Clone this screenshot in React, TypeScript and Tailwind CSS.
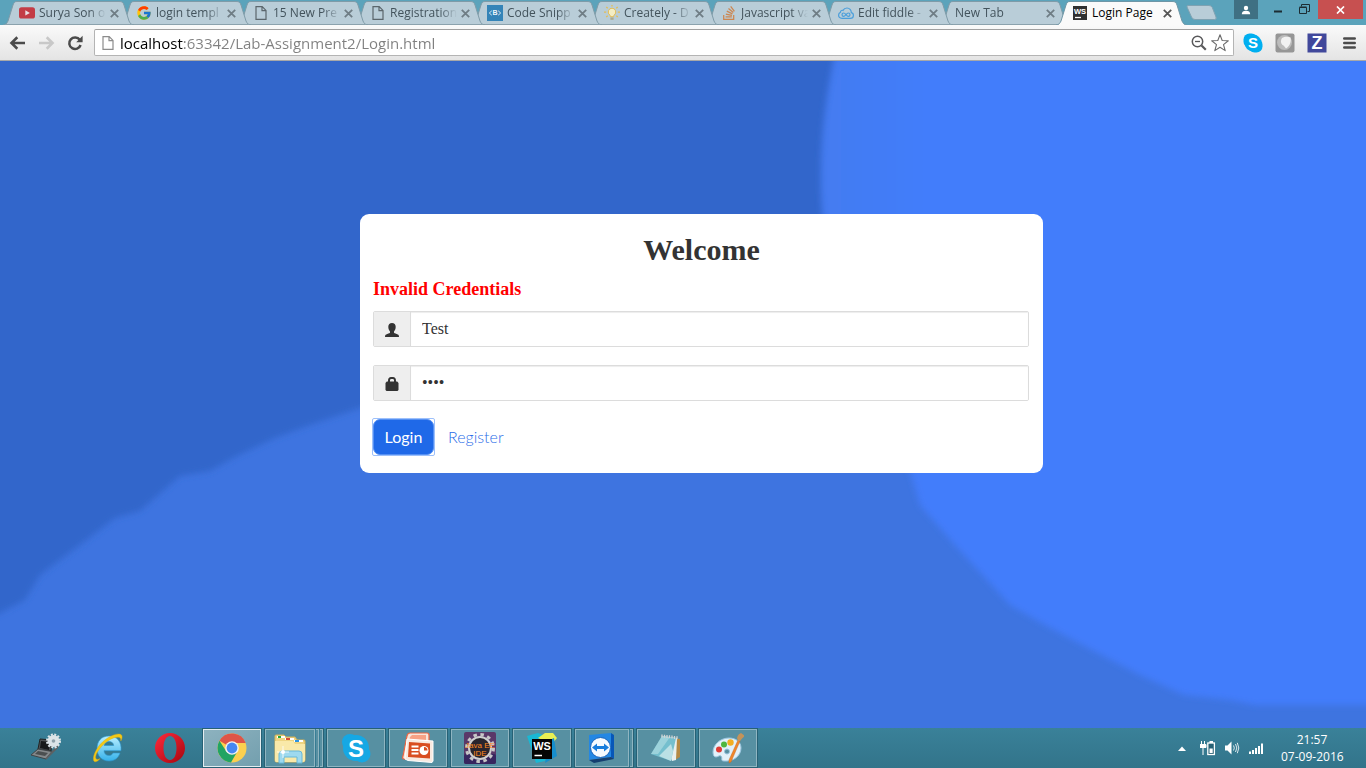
import React from "react";
import { FcGoogle } from "react-icons/fc";
import { FaStackOverflow } from "react-icons/fa";

const UI_FONT = "font-['Open_Sans','Noto_Sans',sans-serif]";

/* ---------- tab icons ---------- */

function PageIcon({ className = "" }: { className?: string }) {
  return (
    <svg viewBox="0 0 16 16" className={`h-4 w-4 shrink-0 ${className}`} fill="none" stroke="currentColor" strokeWidth="1.2">
      <path d="M3 1.6h6.2L13 5.4v9H3zM9 1.6v4h4" />
    </svg>
  );
}

function YoutubeIcon() {
  return (
    <svg viewBox="0 0 16 16" className="h-4 w-4 shrink-0">
      <rect x="0" y="2.3" width="16" height="11.2" rx="2.6" fill="#c33c46" />
      <path d="M6.3 5.2v5.4l4.6-2.7z" fill="#eadfe4" />
    </svg>
  );
}

function CodeIcon() {
  return (
    <svg viewBox="0 0 16 16" className="h-4 w-4 shrink-0">
      <rect width="16" height="16" fill="#3484b8" />
      <path d="M4.8 5.8 2.3 8l2.5 2.2M11.2 5.8 13.7 8l-2.5 2.2" stroke="#dcebf3" fill="none" />
      <text x="8" y="10.4" fontSize="7" fontWeight="700" textAnchor="middle" fill="#eef6fa" fontFamily="Liberation Sans">B</text>
    </svg>
  );
}

function BulbIcon() {
  return (
    <svg viewBox="0 0 16 16" className="h-4 w-4 shrink-0">
      <path d="M8 3.2a3.8 3.8 0 0 0-2.3 6.8c.6.6.6 1 .7 1.7h3.2c.1-.7.1-1.1.7-1.7A3.8 3.8 0 0 0 8 3.2z" fill="#f3edc4" stroke="#e3bd55" strokeWidth="1" />
      <path d="M6.4 12.5h3.2v2.3H6.4z" fill="#a9a98f" />
      <path d="M8 0v1.5M2.3 2l1.4 1.3M13.7 2l-1.4 1.3M0 7.2h2.2M13.8 7.2H16M2.2 12l1.5-1.2M13.8 12l-1.5-1.2" stroke="#e3bd55" strokeWidth="1.3" />
    </svg>
  );
}

function FiddleIcon() {
  return (
    <svg viewBox="0 0 16 16" className="h-4 w-4 shrink-0" fill="none" stroke="#4a9edb" strokeWidth="1.2">
      <path d="M4 13.3h8.2c2 0 3.2-1.3 3.2-2.9 0-1.5-1-2.6-2.1-2.8C13.400 5 11.500 3 9 3 7.200 3 5.800 3.900 5 5.400c-1.400-.5-2.600.5-2.500 1.900C1.300 7.800.6 8.900.6 10.100c0 1.900 1.500 3.200 3.400 3.200z" />
      <path d="M8 9.600C7.200 8.600 6.500 8 5.700 8a1.700 1.700 0 0 0 0 3.400C7.200 11.400 8.500 8 10.300 8a1.700 1.700 0 0 1 0 3.400c-.8 0-1.500-.8-2.300-1.800z" />
    </svg>
  );
}

function WebStormIcon() {
  return (
    <svg viewBox="0 0 16 16" className="h-4 w-4 shrink-0">
      <rect x="1" y="1" width="14" height="14" fill="#303030" />
      <text x="8" y="9" fontSize="7.500" fontWeight="700" textAnchor="middle" fill="#fff" fontFamily="Liberation Sans">WS</text>
      <path d="M3 12.500h6" stroke="#fff" strokeWidth="1.300" />
    </svg>
  );
}

interface TabInfo {
  title: string;
  icon: React.ReactNode;
  active?: boolean;
}

const tabs: TabInfo[] = [
  { title: "Surya Son of", icon: <YoutubeIcon /> },
  { title: "login templ", icon: <FcGoogle className="h-4 w-4 shrink-0" /> },
  { title: "15 New Pre", icon: <PageIcon className="text-[#5b666c]" /> },
  { title: "Registration", icon: <PageIcon className="text-[#5b666c]" /> },
  { title: "Code Snipp", icon: <CodeIcon /> },
  { title: "Creately - D", icon: <BulbIcon /> },
  { title: "Javascript va", icon: <FaStackOverflow className="h-4 w-4 shrink-0 text-[#cc8650]" /> },
  { title: "Edit fiddle -", icon: <FiddleIcon /> },
  { title: "New Tab", icon: null },
  { title: "Login Page", icon: <WebStormIcon />, active: true },
];

function Tab({ tab, order }: { tab: TabInfo; order: number }) {
  return (
    <div className="relative -mr-[14px] grid h-6 w-[131px] shrink-0 grid-cols-1" style={{ zIndex: order }}>
      <svg viewBox="0 0 131 24" className="col-start-1 row-start-1 h-6 w-full" preserveAspectRatio="none">
        <path
          d="M0 24C3 24 4 22 5 20L10 4C11 1 12 .5 14 .5H116C119 .5 120 1 121 4L126 20C127 22 128 24 131 24"
          fill={tab.active ? "#fafafa" : "#b9cdd8"}
          stroke={tab.active ? "#6f96a6" : "#7f9ba8"}
        />
        {!tab.active && <path d="M3 23.500H128" stroke="#8ba2ad" />}
      </svg>
      <div className="col-start-1 row-start-1 flex items-center pr-[15px] pl-4">
        {tab.icon}
        <a
          href="#"
          className={`h-5 min-w-0 flex-1 overflow-hidden text-xs leading-5 whitespace-nowrap ${tab.icon ? "ml-1" : ""} ${
            tab.active
              ? "text-black"
              : "text-[#43535c] [mask-image:linear-gradient(to_right,black_75%,transparent_100%)]"
          }`}
        >
          {tab.title}
        </a>
        <button aria-label={`Close ${tab.title}`} className="ml-1 h-[9px] w-[9px]">
          <svg viewBox="0 0 9 9" className="block h-[9px] w-[9px]">
            <path d="M.8.8l7.400 7.400M8.200.8L.8 8.200" stroke={tab.active ? "#555" : "#6f7d85"} strokeWidth="1.800" />
          </svg>
        </button>
      </div>
    </div>
  );
}

function TabStrip() {
  return (
    <div className="flex h-[25px] items-start justify-between bg-[#5ba3bb]">
      <div className="relative z-10 flex pt-px pl-[3px]">
        {tabs.map((tab, i) => (
          <Tab key={tab.title} tab={tab} order={tab.active ? 50 : tabs.length - i} />
        ))}
        <button aria-label="New tab" className="mt-1 ml-[12px] h-4 w-8">
          <svg viewBox="0 0 32 16" className="block h-4 w-8">
            <path d="M3 .5h21q2.500 0 3.300 2L31 12q1 2.500-1.500 2.500H10q-2.500 0-3.500-2.500L2 2Q1.500.5 3 .5z" fill="#b9cdd8" stroke="#7fa2b2" />
          </svg>
        </button>
      </div>
      <div className="flex h-[19px] shrink-0 pr-[3px]">
        <button aria-label="Profile" className="flex w-6 items-center justify-center bg-[#3f7083]">
          <svg viewBox="0 0 10 10" className="h-[10px] w-[10px]" fill="#fff">
            <circle cx="5" cy="3" r="2.200" />
            <path d="M.8 9.300c0-2.500 1.500-3.500 4.200-3.500s4.200 1 4.200 3.500z" />
          </svg>
        </button>
        <button aria-label="Minimise" className="flex w-[36px] items-center justify-center pt-1 pl-1">
          <svg viewBox="0 0 8 3" className="h-[3px] w-2"><rect width="8" height="2" y=".5" fill="#1c2c33" /></svg>
        </button>
        <button aria-label="Restore" className="flex w-6 items-center justify-center pr-1">
          <svg viewBox="0 0 11 11" className="h-[11px] w-[11px]" fill="none" stroke="#1c2c33">
            <path d="M2.500 2.500v-2h8v7h-2" />
            <path d="M.5 3.500h7v6h-7zM.5 3h7" />
          </svg>
        </button>
        <button aria-label="Close window" className="flex w-[45px] items-center justify-center bg-[#c75050]">
          <svg viewBox="0 0 9 8" className="h-2 w-[9px]"><path d="M1 .5l7 7M8 .5l-7 7" stroke="#fff" strokeWidth="1.700" /></svg>
        </button>
      </div>
    </div>
  );
}

function Toolbar() {
  return (
    <div className="flex h-9 items-center border-b border-[#a8a8a8] bg-linear-to-b from-[#fafafa] to-[#e4e4e4] pr-[10px] pl-[9px]">
      <button aria-label="Back" className="h-4 w-4">
        <svg viewBox="0 0 16 16" className="h-4 w-4" fill="none" stroke="#4b4b4b" strokeWidth="2.600"><path d="M16 8H3M8.300 2.300 2.500 8l5.800 5.700" /></svg>
      </button>
      <button aria-label="Forward" className="ml-[14px] h-4 w-4">
        <svg viewBox="0 0 16 16" className="h-4 w-4" fill="none" stroke="#c8c8c8" strokeWidth="2.600"><path d="M0 8h13M7.700 2.300 13.500 8l-5.800 5.700" /></svg>
      </button>
      <button aria-label="Reload" className="ml-3 h-4 w-4">
        <svg viewBox="0 0 16 16" className="h-4 w-4">
          <path d="M12.800 4.800A5.800 5.800 0 1 0 13.600 10" fill="none" stroke="#4b4b4b" strokeWidth="2.500" />
          <path d="M15.600.8v6.400H9.200z" fill="#4b4b4b" />
        </svg>
      </button>
      <div className="ml-[11px] flex h-[27px] min-w-0 flex-1 items-center rounded-[2px] border border-[#b4b4b4] border-t-[#a0a0a0] bg-white pr-1 pl-[5px]">
        <PageIcon className="text-[#8c8c8c]" />
        <input
          aria-label="Address"
          defaultValue="localhost:63342/Lab-Assignment2/Login.html"
          className="ml-1 h-6 min-w-0 flex-1 bg-[linear-gradient(to_right,#000_63px,#808080_63px)] bg-clip-text text-[15px] text-transparent outline-none"
        />
        <button aria-label="Zoom" className="h-4 w-4">
          <svg viewBox="0 0 16 16" className="h-4 w-4" fill="none" stroke="#59595b">
            <circle cx="6.500" cy="6.500" r="5.200" strokeWidth="1.500" />
            <path d="M4 6.500h5" strokeWidth="1.300" />
            <path d="M10.500 10.500 14.800 14.800" strokeWidth="2.200" />
          </svg>
        </button>
        <button aria-label="Bookmark" className="ml-1 h-[18px] w-[18px]">
          <svg viewBox="0 0 18 18" className="h-[18px] w-[18px]" fill="none" stroke="#6b6b6b" strokeWidth="1.100" strokeLinejoin="round">
            <path d="M9 .8l2.200 5.700 6.100.3-4.800 3.800 1.700 6L9 13.200l-5.200 3.400 1.700-6L.7 6.800l6.100-.3z" />
          </svg>
        </button>
      </div>
      <button aria-label="Skype" className="ml-[9px] h-5 w-5">
        <svg viewBox="0 0 20 20" className="h-5 w-5">
          <rect x=".5" y=".5" width="14" height="14" rx="6" fill="#00aff0" />
          <rect x="5.500" y="5.500" width="14" height="14" rx="6" fill="#00aff0" />
          <circle cx="10" cy="10" r="8.500" fill="#00aff0" />
          <text x="10" y="15.200" fontSize="15" fontWeight="700" textAnchor="middle" fill="#fff" fontFamily="Liberation Sans">S</text>
        </svg>
      </button>
      <button aria-label="Extension" className="ml-3 h-5 w-5">
        <svg viewBox="0 0 20 20" className="h-5 w-5">
          <rect x=".5" y=".5" width="19" height="19" rx="2" fill="#969696" />
          <circle cx="9.500" cy="9.500" r="7.500" fill="#bcbcbc" />
          <path d="M7 5c2.500-1.500 6-1.500 8.500-.5 1 4-.5 8.500-4.500 11-1-1.500-2-3-3.500-3.500C5.500 10.500 5.500 7 7 5z" fill="#f2f2f2" />
        </svg>
      </button>
      <button aria-label="Zotero" className="ml-3 h-5 w-5">
        <svg viewBox="0 0 20 20" className="h-5 w-5">
          <rect x=".5" y=".5" width="19" height="19" fill="#41489b" />
          <text x="10" y="16.300" fontSize="18" fontWeight="700" textAnchor="middle" fill="#fff" fontFamily="Liberation Sans">Z</text>
        </svg>
      </button>
      <button aria-label="Menu" className="ml-4 h-3 w-[13px]">
        <svg viewBox="0 0 13 12" className="block h-3 w-[13px]" stroke="#4b4b4b" strokeWidth="2.600" strokeLinecap="round"><path d="M1.300 1.500h10.400M1.300 6h10.400M1.300 10.500h10.400" /></svg>
      </button>
    </div>
  );
}

/* ---------- page ---------- */

function Backdrop() {
  return (
    <svg viewBox="0 0 1366 667" preserveAspectRatio="none" className="col-start-1 row-start-1 h-full w-full">
      <defs>
        <filter id="soft" x="-5%" y="-5%" width="110%" height="110%">
          <feGaussianBlur stdDeviation="3" />
        </filter>
        <linearGradient id="rim" x1="820" x2="930" y1="0" y2="0" gradientUnits="userSpaceOnUse">
          <stop offset="0" stopColor="#447cf0" />
          <stop offset="1" stopColor="#427dfb" />
        </linearGradient>
      </defs>
      <rect width="1366" height="667" fill="#3e74e0" />
      <path d="M-20 -20H900V300H480L400 334 360 347 310 364 275 377 235 396 210 410 180 415 140 450 115 457 80 484 40 514 25 539 0 552 -20 562z" fill="#3266cb" filter="url(#soft)" />
      <path d="M838 -20C828 20 821 70 821 110C819 200 850 320 910 410L920 444 955 484 1000 533 1010 544 1045 564 1092 589 1140 614 1184 634 1230 639 1255 644 1390 644V-20z" fill="url(#rim)" filter="url(#soft)" />
    </svg>
  );
}

function Field({ id, label, type, value, children }: { id: string; label: string; type: string; value: string; children: React.ReactNode }) {
  return (
    <div className="flex h-9 overflow-hidden rounded-[2px] border border-[#dcdcdc]">
      <label htmlFor={id} aria-label={label} className="flex w-[37px] items-center justify-center border-r border-[#dcdcdc] bg-[#eee] pt-px text-[#333]">
        {children}
      </label>
      <input
        id={id}
        type={type}
        defaultValue={value}
        className="min-w-0 flex-1 bg-white px-[11px] text-base text-[#333] shadow-[inset_0_1px_1px_rgba(0,0,0,0.075)] outline-none"
      />
    </div>
  );
}

function LoginPage() {
  return (
    <main className="grid flex-1 grid-cols-1">
      <Backdrop />
      <div className="z-10 col-start-1 row-start-1 flex items-start justify-center pt-[153px] pb-8 pl-[37px]">
        <form
          onSubmit={(e) => e.preventDefault()}
          className="w-[50vw] rounded-[9px] bg-white px-[13px] pt-[19px] pb-[17px] font-['Liberation_Serif',serif]"
        >
          <h1 className="text-center text-[30px] leading-[33px] font-bold text-[#333]">Welcome</h1>
          <p className="mt-[13px] text-lg leading-5 font-bold text-[#f00]">Invalid Credentials</p>
          <div className="mt-3 flex flex-col gap-[18px] pr-px">
            <Field id="user" label="User name" type="text" value="Test">
              <svg viewBox="0 0 14 14" className="h-[14px] w-[14px]" fill="currentColor">
                <path d="M7 0C9.300 0 10.700 1.500 10.700 3.700c0 1.900-.7 3.600-1.700 4.700v1.400c.6.700 2.400 1 3.800 1.700.8.400 1.200 1 1.200 2.500H0c0-1.500.4-2.100 1.200-2.500 1.400-.7 3.200-1 3.800-1.700V8.400C4 7.300 3.300 5.600 3.300 3.700 3.300 1.500 4.700 0 7 0z" />
              </svg>
            </Field>
            <Field id="pass" label="Password" type="password" value="test">
              <svg viewBox="0 0 14 14" className="h-[14px] w-[14px]" fill="currentColor">
                <path d="M3 4.500V3.800C3 1.200 4.200 0 6 0h2c1.800 0 3 1.200 3 3.800v.7h1.200L13.500 6v7l-1 1H1.500l-1-1V6l1.300-1.500zm2 0h4V3.600C9 2.500 8.600 2 7.700 2H6.300C5.400 2 5 2.500 5 3.600z" />
              </svg>
            </Field>
          </div>
          <div className="mt-[17px] flex items-center font-['Lato',sans-serif] text-base">
            <span className="-ml-px rounded-[2px] border border-[#9dc0fb]">
              <button type="submit" className="block h-9 w-[61px] rounded-[7px] border border-[#5590f3] bg-[#1f69e8] pb-px text-white">
                Login
              </button>
            </span>
            <a href="#register" className="ml-[13px] pb-px font-light text-[#2a6de8]">Register</a>
          </div>
        </form>
      </div>
    </main>
  );
}

/* ---------- taskbar ---------- */

const ICON = "h-8 w-8 shrink-0";

function LaptopIcon() {
  return (
    <svg viewBox="0 0 32 32" className={ICON}>
      <path d="M10 7l12 1-1 11-13-2z" fill="#4e5254" stroke="#222" />
      <path d="M11 9l9 1-1 8-9-2z" fill="#17191a" />
      <path d="M8 17l14 2.500-6 7.500L1 23z" fill="#85898b" stroke="#404446" />
      <path d="M8 19l10 2-3 3-10-2z" fill="#4b4f50" />
      <path d="M22 19l6-7v4l-12 12v-2z" fill="#5d6163" />
      <circle cx="23.500" cy="9" r="6" fill="#dce4e8" />
      <circle cx="23.500" cy="9" r="6.500" fill="none" stroke="#dce4e8" strokeWidth="2" strokeDasharray="2 1.400" />
      <circle cx="23.500" cy="9" r="1.800" fill="#8fa1aa" />
    </svg>
  );
}

function ExplorerIcon() {
  return (
    <svg viewBox="0 0 32 32" className={ICON}>
      <defs>
        <linearGradient id="ieg" x1="0" y1="0" x2="0" y2="1"><stop offset="0" stopColor="#b9efff" /><stop offset="1" stopColor="#35b1ea" /></linearGradient>
      </defs>
      <path d="M17 4C9 4 5 9.500 5 16.500 5 24 10 29 17 29c5.500 0 9.500-3 11-8h-7c-1 2-2.500 2.500-4 2.500-3 0-4.800-1.800-5-4.800h17C30 10 25 4 17 4zm-4.900 9.500C12.500 11 14.500 9.500 17 9.500s4.500 1.500 4.700 4z" fill="url(#ieg)" stroke="#2a96d0" strokeWidth=".6" />
      <path d="M8 26.500C5.500 30 2 31 1.500 28 .5 23 6 13 13.500 7.500 20 2.500 28 .2 29.800 3.500c.7 1.400.2 3.500-1 5.500.2-1.800-.3-3.300-1.800-3.700C23 4.500 16.500 7.500 11 13 5.500 18.500 2.500 24.500 4 26.800c.8 1 2.300.8 4-.3z" fill="#f4c916" stroke="#d8a914" strokeWidth=".4" />
    </svg>
  );
}

function OperaIcon() {
  return (
    <svg viewBox="0 0 32 32" className={ICON}>
      <defs><linearGradient id="opg" x1="0" y1="0" x2="1" y2="1"><stop offset="0" stopColor="#ff2a3c" /><stop offset="1" stopColor="#a5060f" /></linearGradient></defs>
      <path fillRule="evenodd" d="M16 1C7.500 1 1 8 1 16s6.500 15 15 15 15-7 15-15S24.500 1 16 1zm0 3c4 0 6.500 5 6.500 12S20 28 16 28 9.500 23 9.500 16 12 4 16 4z" fill="url(#opg)" />
    </svg>
  );
}

function ChromeIcon() {
  return (
    <svg viewBox="0 0 32 32" className={ICON}>
      <circle cx="16" cy="16" r="14.500" fill="#fcd04f" />
      <path d="M16 16L3.450 8.750A14.500 14.500 0 0 1 29.700 11H16z" fill="#de5548" />
      <path d="M3.450 8.750A14.500 14.500 0 0 0 15 30.460L21.300 19.500 16 16 10.700 20z" fill="#21a463" />
      <circle cx="16" cy="16" r="6.800" fill="#f2f2f2" />
      <circle cx="16" cy="16" r="5.400" fill="#4587f3" />
    </svg>
  );
}

function FolderIcon() {
  return (
    <svg viewBox="0 0 32 32" className={ICON}>
      <path d="M1 4q0-1 1-1h8l2 2h9l2 3h7q1 0 1 1v19q0 2-2 2H2q-1 0-1-2z" fill="#efd582" stroke="#d5b35b" />
      <path d="M3 4h8v2H3z" fill="#fff" /><path d="M4 4h3v2H4z" fill="#25a839" />
      <path d="M11 6h9v2h-9z" fill="#fff" /><path d="M12 6h4v2h-4z" fill="#d94b37" />
      <path d="M20 8h9v2h-9z" fill="#fff" /><path d="M21 8h4v2h-4z" fill="#2f94df" />
      <path d="M1 9h18l2 3h10v16q0 2-2 2H2q-1 0-1-2z" fill="#f9e9a9" />
      <path d="M5 31V22q0-3 3-3h17q3 0 3 3v9h-5v-6H10v6z" fill="#9ed9ef" stroke="#66b8d9" />
      <path d="M9 14v12M3 20h12" stroke="#fff" strokeWidth=".8" /><circle cx="9" cy="20" r="2" fill="#fff" />
    </svg>
  );
}

function SkypeIcon() {
  return (
    <svg viewBox="0 0 32 32" className={ICON}>
      <circle cx="10" cy="10" r="8" fill="#16a8e4" /><circle cx="22" cy="22" r="8.500" fill="#16a8e4" /><circle cx="16" cy="16" r="13" fill="#16a8e4" />
      <text x="16" y="24.500" fontSize="24" fontWeight="700" textAnchor="middle" fill="#fff" fontFamily="Liberation Sans">S</text>
    </svg>
  );
}

function PowerPointIcon() {
  return (
    <svg viewBox="0 0 32 32" className={ICON}>
      <path d="M8 1h17q2 0 2 2v8H8L4 27H2q-2 0-1-3L5 4q.5-3 3-3z" fill="#f6e4da" stroke="#ef6540" strokeWidth="1.200" />
      <path d="M10 3h14v5H9L5 22H4L8 5z" fill="#f7a184" />
      <path d="M5 7l26 2v20l-1 1.500-24-2-3-1.500z" fill="#f8e9e0" stroke="#fff" />
      <path d="M7 10l21 1.500v15L6 25z" fill="#d94d20" />
      <path d="M9.500 14.500h7M9.500 18h7M9.500 21.500h7" stroke="#fff" strokeWidth="1.800" />
      <circle cx="22" cy="18.500" r="4.500" fill="#fff" /><path d="M22 18.500V15a3.500 3.500 0 0 1 3.500 3.500z" fill="#d94d20" />
    </svg>
  );
}

function EclipseIcon() {
  return (
    <svg viewBox="0 0 32 32" className={ICON}>
      <rect width="32" height="32" rx="2" fill="#5a3868" />
      <rect y="22" width="32" height="10" rx="2" fill="#38265f" />
      <circle cx="16" cy="16" r="13.500" fill="none" stroke="#c7c7c7" strokeWidth="3" strokeDasharray="3.500 3.570" />
      <circle cx="16" cy="16" r="11" fill="#29252d" stroke="#d0d0d0" strokeWidth="2" />
      <text x="16" y="15.500" fontSize="8" textAnchor="middle" fill="#ff8a1e" fontFamily="Liberation Sans">Java EE</text>
      <text x="16" y="23.500" fontSize="8" textAnchor="middle" fill="#ff8a1e" fontFamily="Liberation Sans">IDE</text>
    </svg>
  );
}

function WebStormAppIcon() {
  return (
    <svg viewBox="0 0 32 32" className={ICON}>
      <path d="M1 4l11-3 12 5-5 23-9 2z" fill="#19b8d4" />
      <path d="M12 6l7-5h8l4 5-5 6z" fill="#e9ef53" />
      <path d="M24 8l4-2 2 13 1 5-12 7z" fill="#168ecd" />
      <rect x="6" y="7" width="20" height="20" fill="#050505" />
      <text x="16" y="17.500" fontSize="11" fontWeight="700" textAnchor="middle" fill="#fff" fontFamily="Liberation Sans">WS</text>
      <path d="M8.500 23.500H16" stroke="#fff" strokeWidth="1.500" />
    </svg>
  );
}

function TeamViewerIcon() {
  return (
    <svg viewBox="0 0 32 32" className={ICON}>
      <path d="M3 3l22-2v24L3 28z" fill="#2387e4" /><path d="M25 1l3 2v24l-3-2z" fill="#0757b8" /><path d="M3 28l22-3 3 2-20 4z" fill="#153f70" />
      <circle cx="14.500" cy="15.500" r="10" fill="#f5faff" stroke="#1a63b9" />
      <path d="M6 15.500l5-4v2.500h7v-2.500l5 4-5 4V17h-7v2.500z" fill="#187ddd" />
    </svg>
  );
}

function NotepadIcon() {
  return (
    <svg viewBox="0 0 32 32" className={ICON}>
      <path d="M14 5l16 2v18l-5 3z" fill="#b48a46" />
      <path d="M12 4l15 2-1 22-4 1z" fill="#e9f0ef" />
      <path d="M12 4l14 2-5 23L1 22z" fill="#75bfce" />
      <path d="M12 4l8 1L8 22l-7 0z" fill="#b5dfe5" opacity=".6" />
      <path d="M21 12L9 24l12 5 2-10z" fill="#d8eef0" opacity=".7" />
      <path d="M12 2.500v3M14.500 2.700v3M17 3v3M19.500 3.300v3M22 3.600v3M24.500 4v3M27 4.300v3" stroke="#d4d4d4" strokeWidth="1.300" />
    </svg>
  );
}

function PaintIcon() {
  return (
    <svg viewBox="0 0 32 32" className={ICON}>
      <path fillRule="evenodd" d="M17 6C8 6 1 13 1 20c0 3 1 5 3 5s3-2 5-1c2 2-1 5 3 5 9 1 17-5 17-13 0-6-5-10-12-10zm-2 11a2.500 2.500 0 1 1 0 5 2.500 2.500 0 0 1 0-5z" fill="#e2f1fa" stroke="#9bc6df" />
      <circle cx="7" cy="17.500" r="3" fill="#df3c36" /><circle cx="12" cy="12.500" r="3" fill="#4fb63e" /><circle cx="18.500" cy="10.500" r="3.200" fill="#f3ae20" />
      <path d="M26 8l2 1-9 21-2 1v-3z" fill="#ef862c" stroke="#c55f12" strokeWidth=".4" />
      <path d="M26 9l-1-3q1-4 4-5l4 3q-3 2-5 5z" fill="#c4935a" />
    </svg>
  );
}

interface TaskbarApp {
  name: string;
  icon: React.ReactNode;
  extra?: number;
  active?: boolean;
}

const pinned: TaskbarApp[] = [
  { name: "Device tools", icon: <LaptopIcon /> },
  { name: "Internet Explorer", icon: <ExplorerIcon /> },
  { name: "Opera", icon: <OperaIcon /> },
];

const running: TaskbarApp[] = [
  { name: "Chrome", icon: <ChromeIcon />, active: true },
  { name: "File Explorer", icon: <FolderIcon />, extra: 2 },
  { name: "Skype", icon: <SkypeIcon /> },
  { name: "PowerPoint", icon: <PowerPointIcon /> },
  { name: "Eclipse", icon: <EclipseIcon /> },
  { name: "WebStorm", icon: <WebStormAppIcon /> },
  { name: "TeamViewer", icon: <TeamViewerIcon />, extra: 1 },
  { name: "Notepad", icon: <NotepadIcon /> },
  { name: "Paint", icon: <PaintIcon /> },
];

function RunningApp({ app }: { app: TaskbarApp }) {
  return (
    <div className="flex h-10 w-[60px] border border-[#276175]">
      <button
        aria-label={app.name}
        className={`flex min-w-0 flex-1 items-center justify-center border ${
          app.active ? "border-[#e4edf0] bg-linear-to-br from-[#8db2bf] to-[#739fae]" : "border-[#8fb5c1] bg-[#5790a2]"
        }`}
      >
        {app.icon}
      </button>
      {Array.from({ length: app.extra ?? 0 }, (_, i) => (
        <span key={i} className="ml-px w-[3px] border border-l-0 border-[#8fb5c1] bg-[#5790a2]" />
      ))}
    </div>
  );
}

function Taskbar() {
  return (
    <footer className="flex h-10 items-center justify-between bg-linear-to-b from-[#3a8199] to-[#32748a]">
      <div className="flex h-10">
        <div className="flex items-center gap-[30px] pr-4 pl-[30px]">
          {pinned.map((app) => (
            <button key={app.name} aria-label={app.name}>{app.icon}</button>
          ))}
        </div>
        <div className="flex gap-[2px]">
          {running.map((app) => (
            <RunningApp key={app.name} app={app} />
          ))}
        </div>
      </div>
      <div className="flex items-center pr-[23px] text-white">
        <button aria-label="Show hidden icons">
          <svg viewBox="0 0 8 5" className="h-[5px] w-2" fill="#fff"><path d="M0 5l4-4.500L8 5z" /></svg>
        </button>
        <button aria-label="Battery" className="ml-[14px]">
          <svg viewBox="0 0 16 16" className="h-4 w-4">
            <path d="M1.500 1v3M4.500 1v3M0 4.500h6v3H0zM3 7.500V15" stroke="#fff" fill="#fff" strokeWidth="1" />
            <rect x="7.800" y="3" width="6.600" height="11.500" fill="#276175" stroke="#fff" strokeWidth="1.300" />
            <path d="M9.500 1h3.500v2H9.500zM9.500 8.500h3.200v4.500H9.500z" fill="#fff" />
          </svg>
        </button>
        <button aria-label="Volume" className="ml-2">
          <svg viewBox="0 0 16 16" className="h-4 w-4">
            <path d="M1 5.500h2.500L7.500 1.500v13L3.500 10.500H1z" fill="#fff" />
            <path d="M9.500 5.500q1.600 2.500 0 5M11.500 4q2.600 4 0 8M13.300 2.800q3 5.200 0 10.400" fill="none" stroke="#dce9ed" strokeWidth="1" />
          </svg>
        </button>
        <button aria-label="Network" className="ml-2">
          <svg viewBox="0 0 16 16" className="h-4 w-4" fill="#fff"><path d="M1 11.500h2V14H1zM4 10h2v4H4zM7 8h2v6H7zM10 6h2v8h-2zM13 3.500h2V14h-2z" /></svg>
        </button>
        <time className="ml-[17px] w-[62px] text-center text-xs leading-[17px] whitespace-nowrap">
          21:57
          <br />
          07-09-2016
        </time>
      </div>
    </footer>
  );
}

export default function App() {
  return (
    <div className={`flex min-h-screen flex-col overflow-x-hidden ${UI_FONT}`}>
      <TabStrip />
      <Toolbar />
      <LoginPage />
      <Taskbar />
    </div>
  );
}
